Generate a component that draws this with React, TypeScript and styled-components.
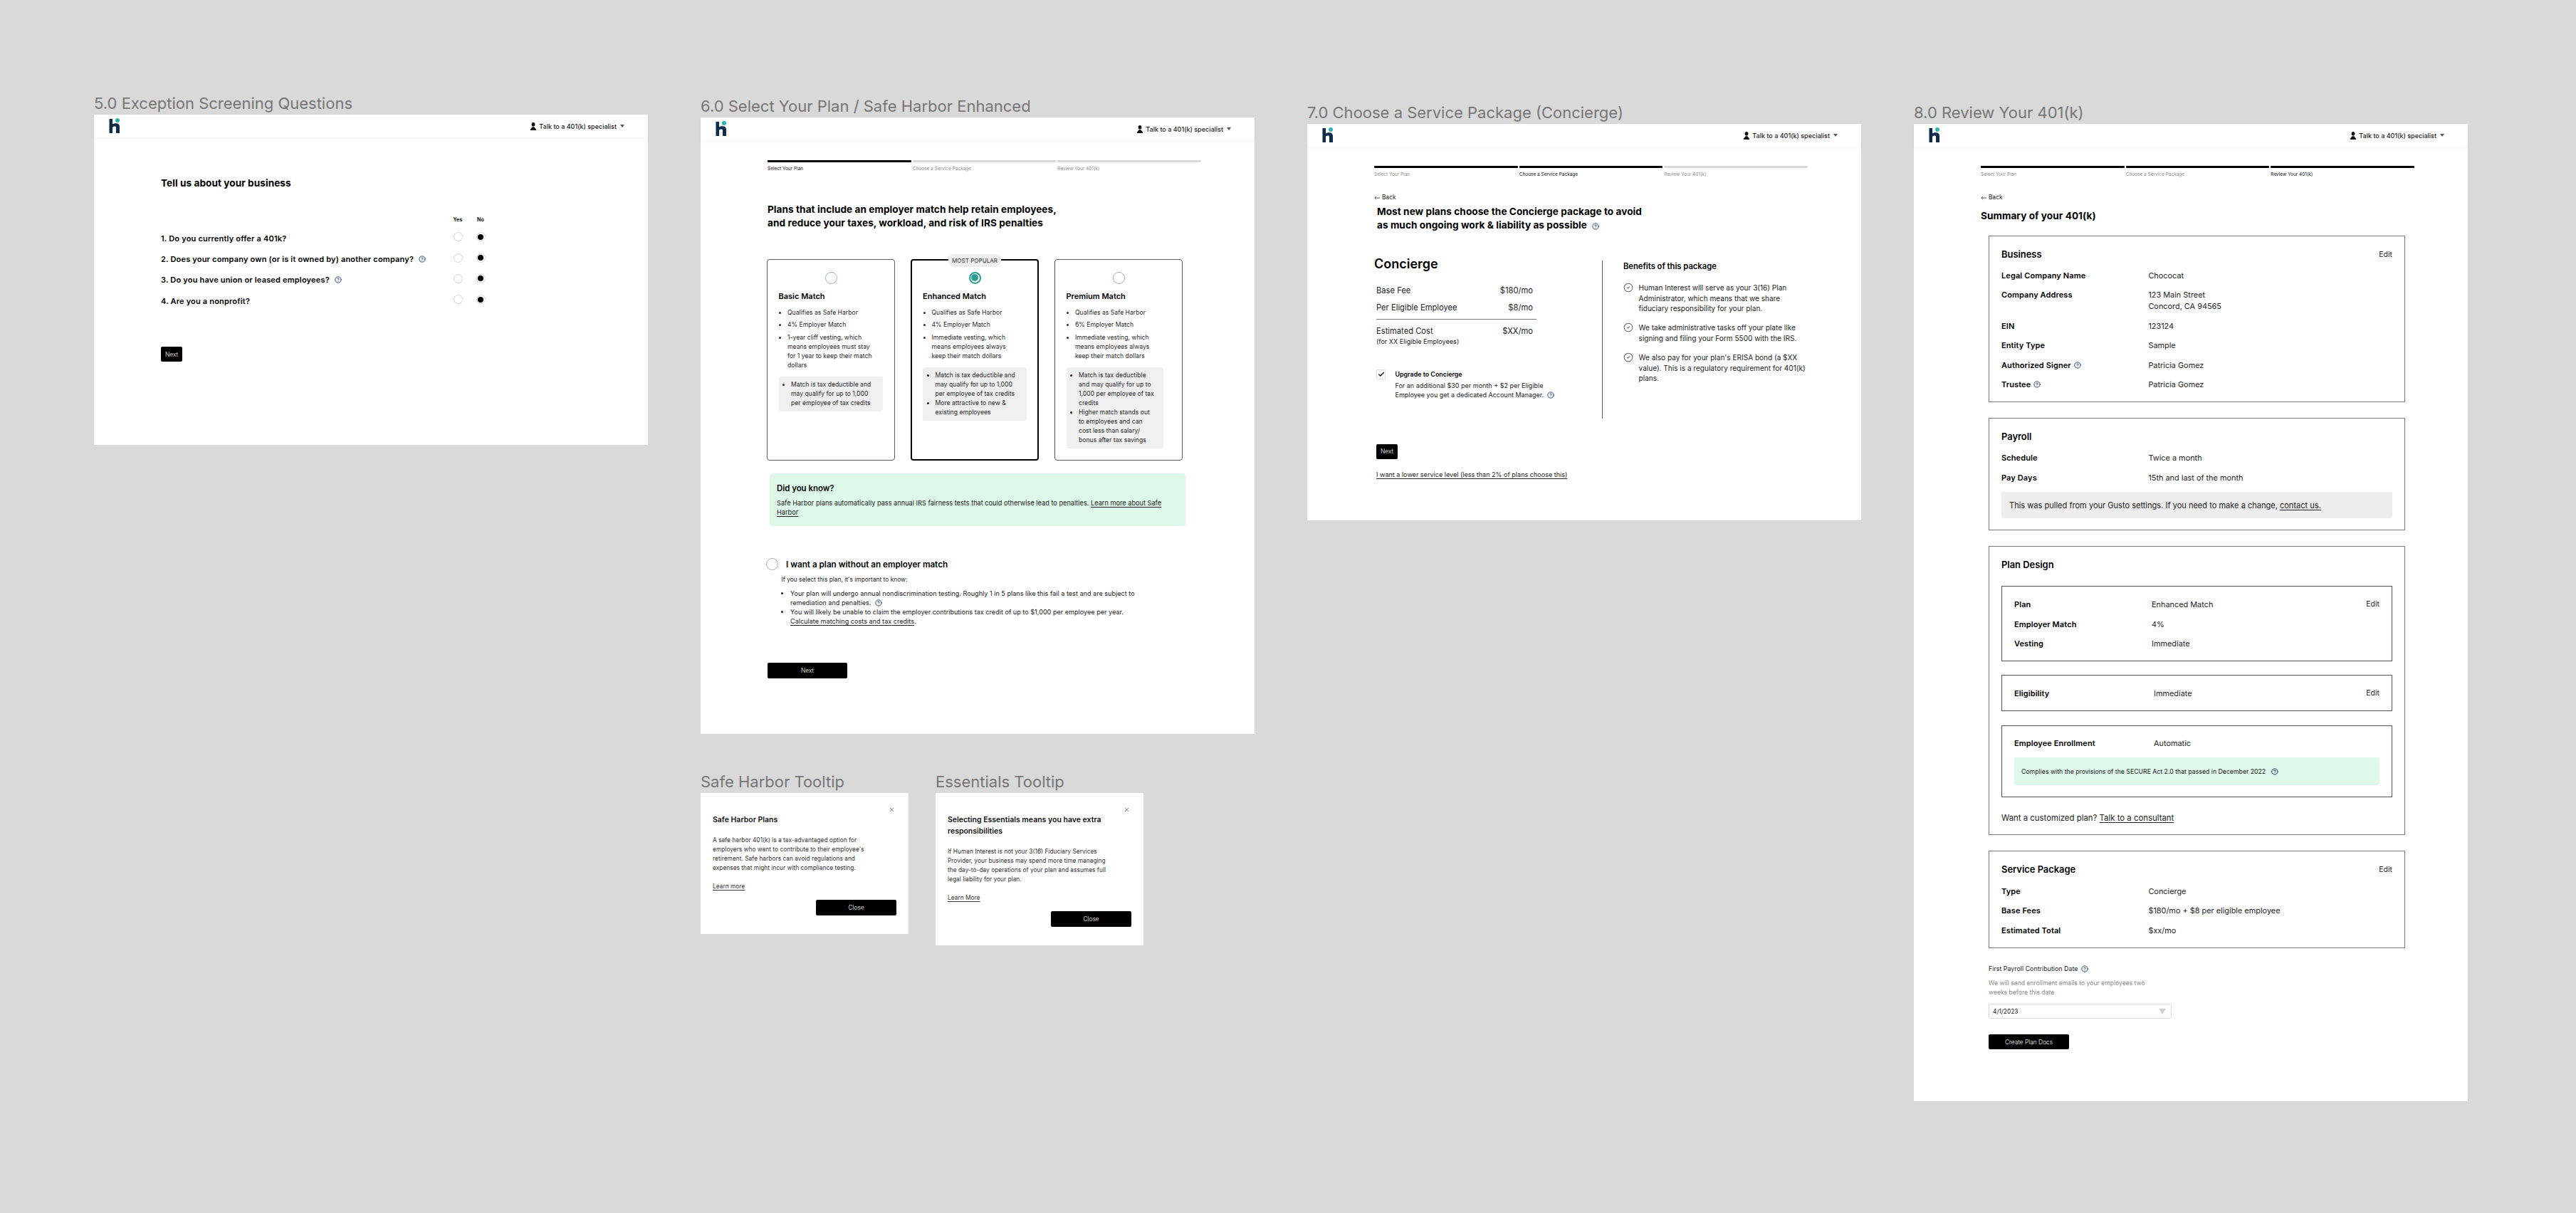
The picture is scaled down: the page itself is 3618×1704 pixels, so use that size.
import React from "react";
import styled, { createGlobalStyle } from "styled-components";
import { Check, CircleCheck, CircleHelp, X } from "lucide-react";

const GlobalStyle = createGlobalStyle`
  html, body { margin: 0; padding: 0; background: #d9d9d9; }
  * { box-sizing: border-box; }
  p, h1, h2, h3, ul { margin: 0; padding: 0; }
`;

const FONT = `"Inter", "Noto Sans", sans-serif`;

const Canvas = styled.div`
  position: relative;
  width: 3618px;
  height: 1704px;
  overflow: hidden;
  background: #d9d9d9;
  font-family: ${FONT};
  color: #1c1c1c;
`;

const Artboard = styled.section<{ $x: number; $y: number; $w?: number }>`
  position: absolute;
  left: ${(p) => p.$x}px;
  top: ${(p) => p.$y - 32}px;
  width: ${(p) => p.$w ?? 778}px;
  display: flex;
  flex-direction: column;
`;

const BoardLabel = styled.h2`
  height: 32px;
  font-size: 22px;
  line-height: 32px;
  font-weight: 400;
  color: #767676;
  white-space: nowrap;
`;

const Frame = styled.div<{ $h: number }>`
  height: ${(p) => p.$h}px;
  background: #fff;
  display: flex;
  flex-direction: column;
`;

const TopBar = styled.header`
  height: 32px;
  flex: none;
  display: flex;
  align-items: center;
  justify-content: space-between;
  padding: 0 33px 0 21px;
  box-shadow: 0 2px 6px rgba(0, 0, 0, 0.035);
`;

const Specialist = styled.div`
  display: flex;
  align-items: center;
  font-size: 9px;
  font-weight: 500;
  color: #1c1c1c;
  white-space: nowrap;
`;

const SpecialistText = styled.span`
  margin: 0 5px 0 3px;
`;

const Caret = styled.svg`
  width: 6px;
  height: 4px;
  fill: #555;
`;

const Main = styled.main`
  padding-left: 94px;
  display: flex;
  flex-direction: column;
  align-items: flex-start;
`;

const StepperRow = styled.div<{ $mt: number }>`
  margin-top: ${(p) => p.$mt}px;
  width: 609px;
  display: grid;
  grid-template-columns: repeat(3, 1fr);
  column-gap: 2px;
`;

const Step = styled.div`
  display: flex;
  flex-direction: column;
  gap: 4.5px;
`;

const StepBar = styled.div<{ $on: boolean }>`
  height: 3px;
  border-radius: 1px;
  background: ${(p) => (p.$on ? "#000" : "#d9d9d9")};
`;

const StepLabel = styled.span<{ $on: boolean }>`
  font-size: 6.5px;
  line-height: 8px;
  color: ${(p) => (p.$on ? "#111" : "#8e8e8e")};
`;

const PageTitle = styled.h1<{ $mt: number; $lh: number; $ml?: number }>`
  margin-top: ${(p) => p.$mt}px;
  margin-left: ${(p) => p.$ml ?? 0}px;
  font-size: 13.6px;
  line-height: ${(p) => p.$lh}px;
  font-weight: 700;
  color: #000;
  white-space: nowrap;
  letter-spacing: 0.06px;
`;

const Help = styled(CircleHelp)`
  display: inline-block;
  vertical-align: -2px;
  width: 10px;
  height: 10px;
  color: #1f3f70;
  stroke-width: 2.2;
  flex: none;
`;

const QuestionHead = styled.div`
  margin-top: 38px;
  margin-left: 410.5px;
  display: grid;
  grid-template-columns: 13px 13px;
  column-gap: 19px;
  justify-items: center;
  font-size: 7.2px;
  line-height: 10px;
  font-weight: 700;
  color: #111;
  white-space: nowrap;
`;

const Questions = styled.div`
  margin-top: 6.4px;
  display: flex;
  flex-direction: column;
`;

const QuestionRow = styled.div`
  height: 29.2px;
  width: 443px;
  display: grid;
  grid-template-columns: 410.5px 13px 13px;
  column-gap: 0;
  align-items: center;
`;

const QuestionText = styled.p`
  display: flex;
  align-items: center;
  gap: 7px;
  font-size: 11px;
  letter-spacing: 0.18px;
  font-weight: 600;
  color: #000;
  white-space: nowrap;
`;

const SmallRadio = styled.span<{ $on?: boolean }>`
  width: 13px;
  height: 13px;
  margin-bottom: 4px;
  margin-left: ${(p) => (p.$on ? "19px" : "0")};
  border-radius: 50%;
  border: 1px solid #d4d4d4;
  background: #fff;
  display: flex;
  align-items: center;
  justify-content: center;
  &::after {
    content: "";
    display: ${(p) => (p.$on ? "block" : "none")};
    width: 8px;
    height: 8px;
    border-radius: 50%;
    background: #000;
  }
`;

const PrimaryButton = styled.button<{ $w: number; $mt: number; $ml?: number }>`
  width: ${(p) => p.$w}px;
  height: 21.5px;
  margin-top: ${(p) => p.$mt}px;
  margin-left: ${(p) => p.$ml ?? 0}px;
  padding: 0;
  border: 0;
  border-radius: 2px;
  background: #000;
  color: #fff;
  font-family: ${FONT};
  font-size: 8.4px;
  font-weight: 300;
  flex: none;
`;

const PlanGrid = styled.div`
  margin-top: 40.7px;
  margin-left: -1px;
  display: grid;
  grid-template-columns: repeat(3, 180px);
  column-gap: 22px;
`;

const PlanCard = styled.article<{ $on?: boolean }>`
  position: relative;
  height: 283px;
  padding: ${(p) => (p.$on ? "15.6px 15px" : "16.6px 15.5px")};
  border: ${(p) => (p.$on ? "2px solid #000" : "1px solid #5a5a5a")};
  border-radius: 4px;
  display: flex;
  flex-direction: column;
`;

const Badge = styled.span`
  position: absolute;
  top: -9.5px;
  left: 50%;
  transform: translateX(-50%);
  height: 18.6px;
  padding: 0 5px;
  border-radius: 8px;
  background: #eee;
  color: #333;
  font-size: 8.1px;
  line-height: 18.6px;
  white-space: nowrap;
`;

const BigRadio = styled.span<{ $on?: boolean }>`
  width: 17px;
  height: 17px;
  flex: none;
  border-radius: 50%;
  border: ${(p) => (p.$on ? "2px solid #2a9d94" : "1.5px solid #9dabbb")};
  background: #fff;
  display: flex;
  align-items: center;
  justify-content: center;
  &::after {
    content: "";
    display: ${(p) => (p.$on ? "block" : "none")};
    width: 10px;
    height: 10px;
    border-radius: 50%;
    background: #2a9d94;
  }
`;

const PlanRadio = styled(BigRadio)`
  align-self: center;
`;

const PlanName = styled.h3`
  margin-top: 8.8px;
  font-size: 11px;
  line-height: 16px;
  font-weight: 600;
  color: #000;
  white-space: nowrap;
`;

const PlanList = styled.ul`
  margin-top: 9px;
  padding-left: 12.5px;
  display: flex;
  flex-direction: column;
  gap: 4.8px;
  font-size: 8.64px;
  line-height: 13px;
  color: #2a2a2a;
  white-space: nowrap;
`;

const PlanNote = styled.ul<{ $w: number }>`
  margin-top: 8.4px;
  width: ${(p) => p.$w}px;
  padding: 5.2px 0 5.2px 17.5px;
  background: #f0f0f0;
  border-radius: 3px;
  font-size: 8.64px;
  line-height: 13px;
  color: #2a2a2a;
  white-space: nowrap;
`;

const GreenInfo = styled.aside`
  margin-top: 17.7px;
  margin-left: 3px;
  width: 584px;
  height: 74px;
  padding: 13px 10px;
  background: #def9ea;
  border-radius: 3px;
`;

const InfoTitle = styled.h3`
  font-size: 11.4px;
  line-height: 16px;
  font-weight: 600;
  color: #000;
`;

const InfoBody = styled.p`
  margin-top: 6.5px;
  font-size: 9.2px;
  line-height: 13px;
  color: #222;
  white-space: nowrap;
`;

const Link = styled.a`
  color: inherit;
  text-decoration: underline;
  text-underline-offset: 1.5px;
  text-decoration-thickness: 0.7px;
`;

const NoMatchRow = styled.div`
  margin-top: 45.5px;
  margin-left: -2px;
  display: flex;
  align-items: center;
  gap: 11px;
`;

const NoMatchTitle = styled.h3`
  font-size: 11.7px;
  font-weight: 600;
  color: #000;
  white-space: nowrap;
`;

const NoMatchIntro = styled.p`
  margin-top: 6.5px;
  margin-left: 19.5px;
  font-size: 8.4px;
  line-height: 13px;
  color: #222;
  white-space: nowrap;
`;

const NoMatchList = styled.ul`
  margin-top: 6px;
  padding-left: 32px;
  font-size: 9.1px;
  line-height: 13px;
  color: #222;
  white-space: nowrap;
`;

const BackLink = styled.div`
  margin-top: 22.5px;
  display: flex;
  align-items: center;
  gap: 3px;
  font-size: 8.4px;
  line-height: 13px;
  color: #222;
`;

const BackArrow = styled.svg`
  width: 8px;
  height: 6px;
  fill: none;
  stroke: #333;
  stroke-width: 0.8;
`;

const PackageColumns = styled.div`
  margin-top: 33.5px;
  height: 228px;
  display: flex;
  align-items: flex-start;
`;

const PackageLeft = styled.div`
  width: 320px;
  display: flex;
  flex-direction: column;
`;

const PackageName = styled.h2`
  font-size: 18px;
  line-height: 22px;
  font-weight: 600;
  color: #000;
`;

const FeeTable = styled.div`
  margin-top: 18px;
  margin-left: 3px;
  width: 225px;
  display: flex;
  flex-direction: column;
`;

const FeeRow = styled.div<{ $mb?: number }>`
  display: flex;
  justify-content: space-between;
  padding-right: 5px;
  margin-bottom: ${(p) => p.$mb ?? 0}px;
  font-size: 11.2px;
  line-height: 16px;
  color: #222;
  white-space: nowrap;
`;

const FeeTotal = styled(FeeRow)`
  border-top: 1px solid #777;
  padding-top: 8px;
`;

const FeeNote = styled.p`
  font-size: 9.1px;
  line-height: 13px;
  color: #222;
`;

const UpgradeRow = styled.div`
  margin-top: 33px;
  margin-left: 3px;
  display: flex;
  gap: 13.5px;
  align-items: flex-start;
`;

const CheckBox = styled.span`
  width: 13px;
  height: 14px;
  flex: none;
  border: 1px solid #ddd;
  border-radius: 2px;
  display: flex;
  align-items: center;
  justify-content: center;
  color: #000;
`;

const UpgradeTitle = styled.h3`
  font-size: 8.9px;
  line-height: 14px;
  font-weight: 600;
  color: #000;
`;

const UpgradeBody = styled.p`
  margin-top: 2.5px;
  font-size: 9px;
  line-height: 13px;
  color: #222;
  white-space: nowrap;
`;

const VerticalRule = styled.div`
  width: 1px;
  height: 222px;
  margin-top: 6px;
  background: #555;
  flex: none;
`;

const PackageRight = styled.div`
  margin-left: 29px;
  padding-top: 6px;
  display: flex;
  flex-direction: column;
`;

const BenefitsTitle = styled.h3`
  font-size: 11.2px;
  line-height: 16px;
  font-weight: 600;
  color: #000;
`;

const BenefitsList = styled.div`
  margin-top: 15.7px;
  display: flex;
  flex-direction: column;
  gap: 12.5px;
`;

const Benefit = styled.div`
  display: flex;
  gap: 7.6px;
  align-items: flex-start;
  font-size: 10.05px;
  line-height: 14.6px;
  color: #222;
  white-space: nowrap;
`;

const BenefitIcon = styled(CircleCheck)`
  width: 14px;
  height: 14px;
  flex: none;
  color: #6a6a6a;
  stroke-width: 1.8;
`;

const LowerLevelLink = styled(Link)`
  display: block;
  margin-top: 15px;
  margin-left: 3px;
  font-size: 9.05px;
  line-height: 13px;
  color: #222;
  white-space: nowrap;
`;

const ReviewStack = styled.div`
  margin-top: 19px;
  margin-left: 11px;
  width: 585px;
  display: flex;
  flex-direction: column;
  gap: 22px;
`;

const ReviewCard = styled.section`
  border: 1px solid #7a7a7a;
  padding: 17px 17px 16px;
  display: flex;
  flex-direction: column;
`;

const CardHead = styled.div`
  display: flex;
  align-items: center;
  justify-content: space-between;
  height: 18px;
`;

const CardTitle = styled.h3`
  font-size: 12.9px;
  line-height: 18px;
  font-weight: 600;
  color: #000;
`;

const EditLink = styled.span`
  font-size: 10.5px;
  line-height: 16px;
  color: #222;
`;

const RowList = styled.div<{ $mt?: number }>`
  margin-top: ${(p) => p.$mt ?? 12}px;
  display: flex;
  flex-direction: column;
  gap: 11.6px;
`;

const DataRow = styled.div<{ $label?: number }>`
  display: grid;
  grid-template-columns: ${(p) => p.$label ?? 206.4}px 1fr auto;
  font-size: 10.9px;
  line-height: 16px;
  white-space: nowrap;
  color: #222;
`;

const DataLabel = styled.span`
  display: flex;
  align-items: center;
  gap: 4px;
  font-size: 11px;
  letter-spacing: 0.1px;
  font-weight: 600;
  color: #000;
  align-self: start;
  height: 16px;
`;

const GrayNotice = styled.p`
  margin-top: 12px;
  height: 37px;
  padding: 0 11px;
  display: flex;
  align-items: center;
  gap: 3px;
  background: #eee;
  border-radius: 2px;
  font-size: 11.05px;
  color: #222;
  white-space: nowrap;
`;

const InnerBox = styled.div<{ $mt: number; $pt?: number }>`
  margin-top: ${(p) => p.$mt}px;
  border: 1px solid #555;
  padding: ${(p) => p.$pt ?? 17}px 17px 16px;
  display: flex;
  flex-direction: column;
`;

const GreenNotice = styled.p`
  margin-top: 12px;
  height: 38.5px;
  padding: 0 10px;
  display: flex;
  align-items: center;
  gap: 8px;
  background: #def9ea;
  border-radius: 2px;
  font-size: 8.72px;
  color: #222;
  white-space: nowrap;
`;

const CustomPlan = styled.p`
  margin-top: 21px;
  margin-bottom: -1px;
  font-size: 11.4px;
  line-height: 16px;
  color: #222;
`;

const DateLabel = styled.p`
  margin-top: 22.5px;
  margin-left: 11px;
  display: flex;
  align-items: center;
  gap: 5px;
  font-size: 8.9px;
  line-height: 13px;
  color: #222;
`;

const DateHelp = styled.p`
  margin-top: 8px;
  margin-left: 11px;
  font-size: 8.6px;
  line-height: 13px;
  color: #8a8a8a;
  white-space: nowrap;
`;

const DateSelect = styled.div`
  margin-top: 8.5px;
  margin-left: 11px;
  width: 257px;
  height: 21.5px;
  padding: 0 7px 0 5px;
  border: 1px solid #ddd;
  border-radius: 2px;
  display: flex;
  align-items: center;
  justify-content: space-between;
  font-size: 8.4px;
  color: #222;
`;

const SelectArrow = styled.svg`
  width: 10px;
  height: 8px;
  fill: #d0d0d0;
`;

const TooltipFrame = styled(Frame)`
  position: relative;
  padding: 30px 17px 0;
`;

const TooltipClose = styled(X)`
  position: absolute;
  top: 19px;
  right: 19.5px;
  width: 9px;
  height: 9px;
  color: #55606e;
  stroke-width: 2;
`;

const TooltipTitle = styled.h3`
  font-size: 10.5px;
  line-height: 16px;
  font-weight: 600;
  color: #111;
  white-space: nowrap;
`;

const TooltipBody = styled.p`
  margin-top: 13.5px;
  font-size: 8.4px;
  line-height: 13px;
  color: #333;
  white-space: nowrap;
`;

const TooltipLink = styled(Link)`
  display: block;
  margin-top: 13px;
  font-size: 8.4px;
  line-height: 13px;
  color: #333;
`;

const TooltipButton = styled(PrimaryButton)`
  display: block;
  margin-left: auto;
`;

const Logo = () => (
  <svg width="16" height="22" viewBox="0 0 16 22">
    <path
      fill="#0f2c4a"
      d="M0.5 1H5V8.6C6.4 7.6 8 7.2 10 7.2C13.2 7.2 15 9 15 12V21H10V13.2C10 12 9.2 11.4 8 11.4C6.4 11.4 5 12.2 5 13.8V21H0.5Z"
    />
    <circle cx="12" cy="3" r="3" fill="#2bb5ac" />
  </svg>
);

const PersonIcon = () => (
  <svg width="10" height="11" viewBox="0 0 10 11">
    <ellipse cx="5" cy="2.8" rx="2.4" ry="2.8" fill="#111" />
    <path fill="#111" d="M0.8 11C0.8 8.4 3 7.8 3.8 6.2H6.2C7 7.8 9.2 8.4 9.2 11Z" />
  </svg>
);

const Header = () => (
  <TopBar>
    <Logo />
    <Specialist>
      <PersonIcon />
      <SpecialistText>Talk to a 401(k) specialist</SpecialistText>
      <Caret viewBox="0 0 6 4">
        <path d="M0 0H6L3 4Z" />
      </Caret>
    </Specialist>
  </TopBar>
);

const STEPS = ["Select Your Plan", "Choose a Service Package", "Review Your 401(k)"];

const Stepper = ({ active, bars, mt }: { active: number; bars: number; mt: number }) => (
  <StepperRow $mt={mt}>
    {STEPS.map((s, i) => (
      <Step key={s}>
        <StepBar $on={i < bars} />
        <StepLabel $on={i === active}>{s}</StepLabel>
      </Step>
    ))}
  </StepperRow>
);

const Back = () => (
  <BackLink>
    <BackArrow viewBox="0 0 8 6">
      <path d="M8 3H0.8M3 0.8L0.8 3L3 5.2" />
    </BackArrow>
    Back
  </BackLink>
);

const Screening = () => (
  <Artboard $x={132} $y={161}>
    <BoardLabel>5.0 Exception Screening Questions</BoardLabel>
    <Frame $h={464}>
      <Header />
      <Main>
        <PageTitle $mt={55} $lh={18}>
          Tell us about your business
        </PageTitle>
        <QuestionHead>
          <span>Yes</span>
          <span>No</span>
        </QuestionHead>
        <Questions>
          {[
            ["1. Do you currently offer a 401k?", false],
            ["2. Does your company own (or is it owned by) another company?", true],
            ["3. Do you have union or leased employees?", true],
            ["4. Are you a nonprofit?", false],
          ].map(([q, help]) => (
            <QuestionRow key={q as string}>
              <QuestionText>
                {q}
                {help && <Help />}
              </QuestionText>
              <SmallRadio />
              <SmallRadio $on />
            </QuestionRow>
          ))}
        </Questions>
        <PrimaryButton $w={30} $mt={49.8}>
          Next
        </PrimaryButton>
      </Main>
    </Frame>
  </Artboard>
);

const SelectPlan = () => (
  <Artboard $x={984} $y={165}>
    <BoardLabel>6.0 Select Your Plan / Safe Harbor Enhanced</BoardLabel>
    <Frame $h={866}>
      <Header />
      <Main>
        <Stepper active={0} bars={1} mt={28} />
        <PageTitle $mt={44.5} $lh={19.3}>
          Plans that include an employer match help retain employees,
          <br />
          and reduce your taxes, workload, and risk of IRS penalties
        </PageTitle>
        <PlanGrid>
          <PlanCard>
            <PlanRadio />
            <PlanName>Basic Match</PlanName>
            <PlanList>
              <li>Qualifies as Safe Harbor</li>
              <li>4% Employer Match</li>
              <li>
                1-year cliff vesting, which
                <br />
                means employees must stay
                <br />
                for 1 year to keep their match
                <br />
                dollars
              </li>
            </PlanList>
            <PlanNote $w={146}>
              <li>
                Match is tax deductible and
                <br />
                may qualify for up to 1,000
                <br />
                per employee of tax credits
              </li>
            </PlanNote>
          </PlanCard>
          <PlanCard $on>
            <Badge>MOST POPULAR</Badge>
            <PlanRadio $on />
            <PlanName>Enhanced Match</PlanName>
            <PlanList>
              <li>Qualifies as Safe Harbor</li>
              <li>4% Employer Match</li>
              <li>
                Immediate vesting, which
                <br />
                means employees always
                <br />
                keep their match dollars
              </li>
            </PlanList>
            <PlanNote $w={146}>
              <li>
                Match is tax deductible and
                <br />
                may qualify for up to 1,000
                <br />
                per employee of tax credits
              </li>
              <li>
                More attractive to new &amp;
                <br />
                existing employees
              </li>
            </PlanNote>
          </PlanCard>
          <PlanCard>
            <PlanRadio />
            <PlanName>Premium Match</PlanName>
            <PlanList>
              <li>Qualifies as Safe Harbor</li>
              <li>6% Employer Match</li>
              <li>
                Immediate vesting, which
                <br />
                means employees always
                <br />
                keep their match dollars
              </li>
            </PlanList>
            <PlanNote $w={136}>
              <li>
                Match is tax deductible
                <br />
                and may qualify for up to
                <br />
                1,000 per employee of tax
                <br />
                credits
              </li>
              <li>
                Higher match stands out
                <br />
                to employees and can
                <br />
                cost less than salary/
                <br />
                bonus after tax savings
              </li>
            </PlanNote>
          </PlanCard>
        </PlanGrid>
        <GreenInfo>
          <InfoTitle>Did you know?</InfoTitle>
          <InfoBody>
            Safe Harbor plans automatically pass annual IRS fairness tests that could otherwise lead to penalties.{" "}
            <Link>
              Learn more about Safe
              <br />
              Harbor
            </Link>
          </InfoBody>
        </GreenInfo>
        <NoMatchRow>
          <BigRadio />
          <NoMatchTitle>I want a plan without an employer match</NoMatchTitle>
        </NoMatchRow>
        <NoMatchIntro>If you select this plan, it's important to know:</NoMatchIntro>
        <NoMatchList>
          <li>
            Your plan will undergo annual nondiscrimination testing. Roughly 1 in 5 plans like this fail a test and are subject to
            <br />
            remediation and penalties.&nbsp; <Help />
          </li>
          <li>
            You will likely be unable to claim the employer contributions tax credit of up to $1,000 per employee per year.
            <br />
            <Link>Calculate matching costs and tax credits</Link>.
          </li>
        </NoMatchList>
        <PrimaryButton $w={112} $mt={52.5}>
          Next
        </PrimaryButton>
      </Main>
    </Frame>
  </Artboard>
);

const ServicePackage = () => (
  <Artboard $x={1836} $y={174}>
    <BoardLabel>7.0 Choose a Service Package (Concierge)</BoardLabel>
    <Frame $h={557}>
      <Header />
      <Main>
        <Stepper active={1} bars={2} mt={27} />
        <Back />
        <PageTitle $mt={4} $lh={19} $ml={4}>
          Most new plans choose the Concierge package to avoid
          <br />
          as much ongoing work &amp; liability as possible&nbsp; <Help />
        </PageTitle>
        <PackageColumns>
          <PackageLeft>
            <PackageName>Concierge</PackageName>
            <FeeTable>
              <FeeRow $mb={8}>
                <span>Base Fee</span>
                <span>$180/mo</span>
              </FeeRow>
              <FeeRow $mb={8}>
                <span>Per Eligible Employee</span>
                <span>$8/mo</span>
              </FeeRow>
              <FeeTotal>
                <span>Estimated Cost</span>
                <span>$XX/mo</span>
              </FeeTotal>
              <FeeNote>(for XX Eligible Employees)</FeeNote>
            </FeeTable>
            <UpgradeRow>
              <CheckBox>
                <Check size={10} strokeWidth={3.2} />
              </CheckBox>
              <div>
                <UpgradeTitle>Upgrade to Concierge</UpgradeTitle>
                <UpgradeBody>
                  For an additional $30 per month + $2 per Eligible
                  <br />
                  Employee you get a dedicated Account Manager.&nbsp; <Help />
                </UpgradeBody>
              </div>
            </UpgradeRow>
          </PackageLeft>
          <VerticalRule />
          <PackageRight>
            <BenefitsTitle>Benefits of this package</BenefitsTitle>
            <BenefitsList>
              <Benefit>
                <BenefitIcon />
                <span>
                  Human Interest will serve as your 3(16) Plan
                  <br />
                  Administrator, which means that we share
                  <br />
                  fiduciary responsibility for your plan.
                </span>
              </Benefit>
              <Benefit>
                <BenefitIcon />
                <span>
                  We take administrative tasks off your plate like
                  <br />
                  signing and filing your Form 5500 with the IRS.
                </span>
              </Benefit>
              <Benefit>
                <BenefitIcon />
                <span>
                  We also pay for your plan's ERISA bond (a $XX
                  <br />
                  value). This is a regulatory requirement for 401(k)
                  <br />
                  plans.
                </span>
              </Benefit>
            </BenefitsList>
          </PackageRight>
        </PackageColumns>
        <PrimaryButton $w={30} $mt={36} $ml={3}>
          Next
        </PrimaryButton>
        <LowerLevelLink>I want a lower service level (less than 2% of plans choose this)</LowerLevelLink>
      </Main>
    </Frame>
  </Artboard>
);

const Review = () => (
  <Artboard $x={2688} $y={174}>
    <BoardLabel>8.0 Review Your 401(k)</BoardLabel>
    <Frame $h={1373}>
      <Header />
      <Main>
        <Stepper active={2} bars={3} mt={27} />
        <Back />
        <PageTitle $mt={9.5} $lh={18}>
          Summary of your 401(k)
        </PageTitle>
        <ReviewStack>
          <ReviewCard>
            <CardHead>
              <CardTitle>Business</CardTitle>
              <EditLink>Edit</EditLink>
            </CardHead>
            <RowList>
              <DataRow>
                <DataLabel>Legal Company Name</DataLabel>
                <span>Chococat</span>
              </DataRow>
              <DataRow>
                <DataLabel>Company Address</DataLabel>
                <span>
                  123 Main Street
                  <br />
                  Concord, CA 94565
                </span>
              </DataRow>
              <DataRow>
                <DataLabel>EIN</DataLabel>
                <span>123124</span>
              </DataRow>
              <DataRow>
                <DataLabel>Entity Type</DataLabel>
                <span>Sample</span>
              </DataRow>
              <DataRow>
                <DataLabel>
                  Authorized Signer <Help />
                </DataLabel>
                <span>Patricia Gomez</span>
              </DataRow>
              <DataRow>
                <DataLabel>
                  Trustee <Help />
                </DataLabel>
                <span>Patricia Gomez</span>
              </DataRow>
            </RowList>
          </ReviewCard>

          <ReviewCard>
            <CardHead>
              <CardTitle>Payroll</CardTitle>
            </CardHead>
            <RowList>
              <DataRow>
                <DataLabel>Schedule</DataLabel>
                <span>Twice a month</span>
              </DataRow>
              <DataRow>
                <DataLabel>Pay Days</DataLabel>
                <span>15th and last of the month</span>
              </DataRow>
            </RowList>
            <GrayNotice>
              This was pulled from your Gusto settings. If you need to make a change, <Link>contact us.</Link>
            </GrayNotice>
          </ReviewCard>

          <ReviewCard>
            <CardHead>
              <CardTitle>Plan Design</CardTitle>
            </CardHead>
            <InnerBox $mt={20}>
              <RowList $mt={0}>
                <DataRow $label={193}>
                  <DataLabel>Plan</DataLabel>
                  <span>Enhanced Match</span>
                  <EditLink>Edit</EditLink>
                </DataRow>
                <DataRow $label={193}>
                  <DataLabel>Employer Match</DataLabel>
                  <span>4%</span>
                </DataRow>
                <DataRow $label={193}>
                  <DataLabel>Vesting</DataLabel>
                  <span>Immediate</span>
                </DataRow>
              </RowList>
            </InnerBox>
            <InnerBox $mt={19}>
              <DataRow $label={196}>
                <DataLabel>Eligibility</DataLabel>
                <span>Immediate</span>
                <EditLink>Edit</EditLink>
              </DataRow>
            </InnerBox>
            <InnerBox $mt={20} $pt={16}>
              <DataRow $label={196}>
                <DataLabel>Employee Enrollment</DataLabel>
                <span>Automatic</span>
              </DataRow>
              <GreenNotice>
                Complies with the provisions of the SECURE Act 2.0 that passed in December 2022
                <Help />
              </GreenNotice>
            </InnerBox>
            <CustomPlan>
              Want a customized plan? <Link>Talk to a consultant</Link>
            </CustomPlan>
          </ReviewCard>

          <ReviewCard>
            <CardHead>
              <CardTitle>Service Package</CardTitle>
              <EditLink>Edit</EditLink>
            </CardHead>
            <RowList $mt={13}>
              <DataRow>
                <DataLabel>Type</DataLabel>
                <span>Concierge</span>
              </DataRow>
              <DataRow>
                <DataLabel>Base Fees</DataLabel>
                <span>$180/mo + $8 per eligible employee</span>
              </DataRow>
              <DataRow>
                <DataLabel>Estimated Total</DataLabel>
                <span>$xx/mo</span>
              </DataRow>
            </RowList>
          </ReviewCard>
        </ReviewStack>
        <DateLabel>
          First Payroll Contribution Date <Help />
        </DateLabel>
        <DateHelp>
          We will send enrollment emails to your employees two
          <br />
          weeks before this date
        </DateHelp>
        <DateSelect>
          4/1/2023
          <SelectArrow viewBox="0 0 10 8">
            <path d="M0 0H10L5 8Z" />
          </SelectArrow>
        </DateSelect>
        <PrimaryButton $w={113} $mt={21.5} $ml={11}>
          Create Plan Docs
        </PrimaryButton>
      </Main>
    </Frame>
  </Artboard>
);

const SafeHarborTooltip = () => (
  <Artboard $x={984} $y={1114} $w={292}>
    <BoardLabel>Safe Harbor Tooltip</BoardLabel>
    <TooltipFrame $h={198}>
      <TooltipClose />
      <TooltipTitle>Safe Harbor Plans</TooltipTitle>
      <TooltipBody>
        A safe harbor 401(k) is a tax-advantaged option for
        <br />
        employers who want to contribute to their employee's
        <br />
        retirement. Safe harbors can avoid regulations and
        <br />
        expenses that might incur with compliance testing.
      </TooltipBody>
      <TooltipLink>Learn more</TooltipLink>
      <TooltipButton $w={113} $mt={12.5}>
        Close
      </TooltipButton>
    </TooltipFrame>
  </Artboard>
);

const EssentialsTooltip = () => (
  <Artboard $x={1314} $y={1114} $w={292}>
    <BoardLabel>Essentials Tooltip</BoardLabel>
    <TooltipFrame $h={214}>
      <TooltipClose />
      <TooltipTitle>
        Selecting Essentials means you have extra
        <br />
        responsibilities
      </TooltipTitle>
      <TooltipBody>
        If Human Interest is not your 3(16) Fiduciary Services
        <br />
        Provider, your business may spend more time managing
        <br />
        the day-to-day operations of your plan and assumes full
        <br />
        legal liability for your plan.
      </TooltipBody>
      <TooltipLink>Learn More</TooltipLink>
      <TooltipButton $w={113} $mt={12.5}>
        Close
      </TooltipButton>
    </TooltipFrame>
  </Artboard>
);

export default function App() {
  return (
    <>
      <GlobalStyle />
      <Canvas>
        <Screening />
        <SelectPlan />
        <ServicePackage />
        <Review />
        <SafeHarborTooltip />
        <EssentialsTooltip />
      </Canvas>
    </>
  );
}
